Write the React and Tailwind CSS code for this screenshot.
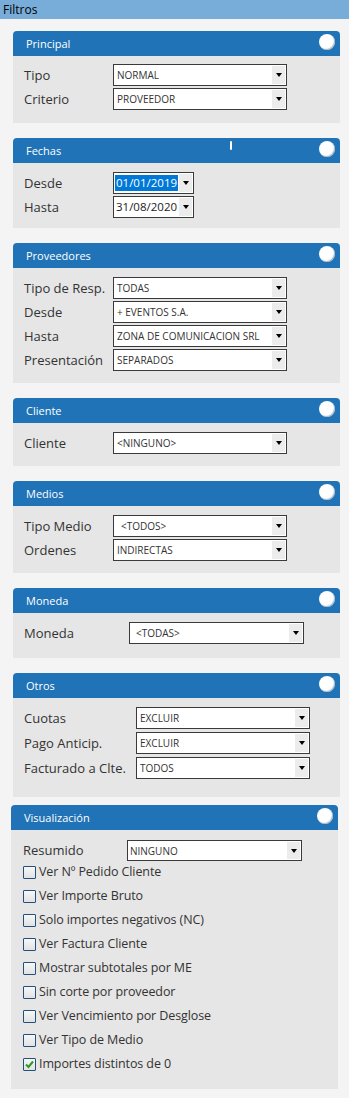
import React from "react";

function Arrow({ w = "w-[13px]" }) {
  return (
    <div className={`absolute right-[1px] top-[1px] bottom-[1px] ${w} bg-[#ececec] flex items-center justify-center`}>
      <div className="w-0 h-0 border-l-[3.5px] border-r-[3.5px] border-t-[4px] border-l-transparent border-r-transparent border-t-black" />
    </div>
  );
}

function Select({ value, w = "w-[174px]", h = "h-[22px]", pl = "pl-[3px]" }) {
  return (
    <div className={`relative ${h} ${w} border border-[#3a3a3a] bg-white flex items-center ${pl} text-[10px] text-[#333] leading-none whitespace-nowrap overflow-hidden`}>
      <span>{value}</span>
      <Arrow />
    </div>
  );
}

function DateSelect({ value, selected }) {
  return (
    <div className="relative h-[22px] w-[81px] border border-[#3a3a3a] bg-white flex items-center pl-[1px] text-[11.5px] text-[#222] leading-none">
      {selected ? (
        <span className="bg-[#0078d7] text-white px-[1px] py-[2px]">{value}</span>
      ) : (
        <span className="px-[1px]">{value}</span>
      )}
      <Arrow />
    </div>
  );
}

function Row({ label, lw = "w-[89px]", children, h = "h-[22px]" }) {
  return (
    <div className={`flex items-center ${h}`}>
      <div className={`${lw} text-[13px] text-[#333] leading-none whitespace-nowrap`}>{label}</div>
      {children}
    </div>
  );
}

function Panel({ title, body, children, extra }) {
  return (
    <section className="w-[327px]">
      <div className="relative h-[25px] bg-[#1f73b6] rounded-t-[4px] flex items-center pl-[13px] text-white text-[11px] leading-none">
        <span>{title}</span>
        {extra}
        <div className="absolute right-[5px] top-[3px] w-[16px] h-[16px] rounded-full bg-white shadow-[inset_-1px_-1px_1px_rgba(120,140,160,0.6)]" />
      </div>
      <div className={`bg-[#e6e6e6] ${body}`}>{children}</div>
    </section>
  );
}

function Check({ label, checked }) {
  return (
    <div className="flex items-center h-[24px]">
      <div className="w-[13px] h-[13px] border border-[#24507e] bg-gradient-to-b from-[#f6f6f6] to-[#e2e2e2] rounded-[1px] flex items-center justify-center">
        {checked && (
          <svg width="11" height="11" viewBox="0 0 11 11">
            <path d="M2 5.5 L4.5 8 L9 2.5" stroke="#2f9a1f" strokeWidth="2" fill="none" />
          </svg>
        )}
      </div>
      <span className="ml-[3px] text-[12.5px] text-[#333] leading-none tracking-[-0.1px]">{label}</span>
    </div>
  );
}

export default function App() {
  return (
    <div className="w-[349px] min-h-[1098px] bg-[#f4f4f4] font-['Open_Sans',sans-serif]">
      <div className="h-[19px] bg-[#78acd9] text-[12px] pl-[3px] flex items-center text-black leading-none">Filtros</div>
      <div className="pt-[12px] pl-[13px] flex flex-col">
        <Panel title="Principal" body="pl-[11px] pt-[8px] pb-[13px] flex flex-col gap-[2px]">
          <Row label="Tipo"><Select value="NORMAL" /></Row>
          <Row label="Criterio"><Select value="PROVEEDOR" /></Row>
        </Panel>

        <div className="mt-[15px]">
          <Panel
            title="Fechas"
            body="pl-[11px] pt-[9px] pb-[10px] flex flex-col gap-[2px]"
            extra={<div className="absolute left-[217px] top-[3px] w-[2px] h-[9px] bg-white rounded-[1px]" />}
          >
            <Row label="Desde"><DateSelect value="01/01/2019" selected /></Row>
            <Row label="Hasta"><DateSelect value="31/08/2020" /></Row>
          </Panel>
        </div>

        <div className="mt-[15px]">
          <Panel title="Proveedores" body="pl-[11px] pt-[9px] pb-[12px] flex flex-col gap-[2px]">
            <Row label="Tipo de Resp."><Select value="TODAS" /></Row>
            <Row label="Desde"><Select value="+ EVENTOS S.A." /></Row>
            <Row label="Hasta"><Select value="ZONA DE COMUNICACION SRL" /></Row>
            <Row label="Presentación"><Select value="SEPARADOS" /></Row>
          </Panel>
        </div>

        <div className="mt-[15px]">
          <Panel title="Cliente" body="pl-[11px] pt-[9px] pb-[12px] flex flex-col gap-[2px]">
            <Row label="Cliente"><Select value="<NINGUNO>" /></Row>
          </Panel>
        </div>

        <div className="mt-[15px]">
          <Panel title="Medios" body="pl-[11px] pt-[9px] pb-[12px] flex flex-col gap-[2px]">
            <Row label="Tipo Medio"><Select value="<TODOS>" pl="pl-[7px]" /></Row>
            <Row label="Ordenes"><Select value="INDIRECTAS" /></Row>
          </Panel>
        </div>

        <div className="mt-[15px]">
          <Panel title="Moneda" body="pl-[11px] pt-[9px] pb-[14px] flex flex-col gap-[2px]">
            <Row label="Moneda" lw="w-[105px]"><Select value="<TODAS>" w="w-[175px]" pl="pl-[6px]" /></Row>
          </Panel>
        </div>

        <div className="mt-[15px]">
          <Panel title="Otros" body="pl-[11px] pt-[9px] pb-[18px] flex flex-col gap-[3px]">
            <Row label="Cuotas" lw="w-[112px]"><Select value="EXCLUIR" /></Row>
            <Row label="Pago Anticip." lw="w-[112px]"><Select value="EXCLUIR" /></Row>
            <Row label="Facturado a Clte." lw="w-[112px]"><Select value="TODOS" /></Row>
          </Panel>
        </div>

        <div className="mt-[8px] -ml-[2px]">
          <Panel title="Visualización" body="pl-[12px] pt-[10px] pb-[13px] flex flex-col">
            <Row label="Resumido" lw="w-[104px]" h="h-[21px]"><Select value="NINGUNO" w="w-[175px]" h="h-[21px]" pl="pl-[2px]" /></Row>
            <div className="-mt-[1px] flex flex-col">
              <Check label="Ver Nº Pedido Cliente" />
              <Check label="Ver Importe Bruto" />
              <Check label="Solo importes negativos (NC)" />
              <Check label="Ver Factura Cliente" />
              <Check label="Mostrar subtotales por ME" />
              <Check label="Sin corte por proveedor" />
              <Check label="Ver Vencimiento por Desglose" />
              <Check label="Ver Tipo de Medio" />
              <Check label="Importes distintos de 0" checked />
            </div>
          </Panel>
        </div>
      </div>
    </div>
  );
}
